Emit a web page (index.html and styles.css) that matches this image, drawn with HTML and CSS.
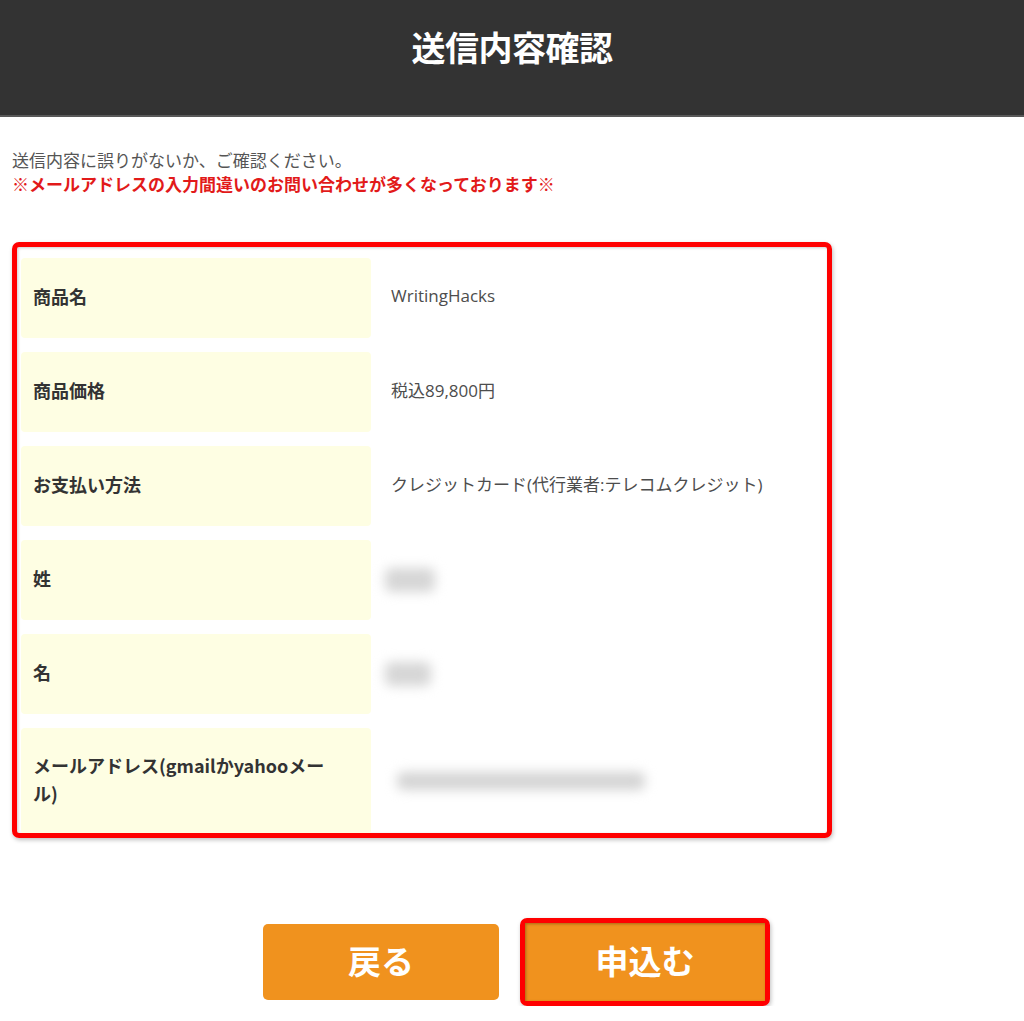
FILE: index.html
```html
<!DOCTYPE html>
<html lang="ja">
<head>
<meta charset="utf-8">
<title>送信内容確認</title>
<link rel="stylesheet" href="styles.css">
</head>
<body>
<header class="header">
  <h1 class="title">送信内容確認</h1>
</header>
<main class="main">
  <p class="intro">送信内容に誤りがないか、ご確認ください。</p>
  <p class="warning">※メールアドレスの入力間違いのお問い合わせが多くなっております※</p>

  <div class="highlight">
    <div class="rows">
      <div class="row">
        <div class="label">商品名</div>
        <div class="value">WritingHacks</div>
      </div>
      <div class="row">
        <div class="label">商品価格</div>
        <div class="value">税込89,800円</div>
      </div>
      <div class="row">
        <div class="label">お支払い方法</div>
        <div class="value">クレジットカード(代行業者:テレコムクレジット)</div>
      </div>
      <div class="row">
        <div class="label">姓</div>
        <div class="value value-blur"><span class="blur blur-short"></span></div>
      </div>
      <div class="row">
        <div class="label">名</div>
        <div class="value value-blur"><span class="blur blur-short2"></span></div>
      </div>
      <div class="row row-tall">
        <div class="label">メールアドレス(gmailかyahooメール)</div>
        <div class="value value-blur"><span class="blur blur-long"></span></div>
      </div>
    </div>
  </div>

  <div class="actions">
    <button class="btn" type="button">戻る</button>
    <div class="btn-mark"><button class="btn btn-submit" type="button">申込む</button></div>
  </div>
</main>
</body>
</html>
```

FILE: styles.css
```css
* { box-sizing: border-box; }

html, body {
  margin: 0;
  padding: 0;
  background: #ffffff;
  font-family: "Noto Sans CJK JP", "Noto Sans", sans-serif;
}

.header {
  height: 117px;
  background: #333333;
  border-bottom: 2px solid #585858;
  display: flex;
  align-items: center;
  justify-content: center;
}

.title {
  margin: 0 0 22px 0;
  color: #ffffff;
  font-size: 34px;
  font-weight: 700;
  letter-spacing: -0.5px;
}

.main {
  padding: 0 12px;
}

.intro {
  margin: 31px 0 0 0;
  font-size: 17px;
  line-height: 24px;
  color: #555555;
}

.warning {
  margin: 0;
  font-size: 17px;
  line-height: 24px;
  font-weight: 700;
  color: #e21a1a;
}

.highlight {
  margin-top: 46px;
  width: 820px;
  height: 596px;
  border: 5px solid #ff0000;
  border-radius: 7px;
  overflow: hidden;
  box-shadow: 1px 2px 4px rgba(0,0,0,0.25), inset 1px 1px 3px rgba(0,0,0,0.2);
  padding: 11px 0 0 4px;
}

.rows {
  display: flex;
  flex-direction: column;
  gap: 14px;
}

.row {
  display: flex;
  align-items: stretch;
}

.label {
  width: 350px;
  flex: none;
  background: #fefee3;
  border-radius: 4px;
  padding: 24px 24px 28px 12px;
  font-size: 18px;
  line-height: 28px;
  font-weight: 700;
  color: #333333;
}

.row-tall .label {
  padding-top: 23px;
  padding-bottom: 27px;
}

.value {
  display: flex;
  align-items: center;
  padding-left: 20px;
  padding-bottom: 5px;
  font-family: "Open Sans", "Noto Sans CJK JP", sans-serif;
  font-size: 17px;
  color: #4d4d4d;
}

.value-blur {
  padding-left: 10px;
  padding-bottom: 0;
}

.blur {
  display: block;
  height: 24px;
  background: #d6d6d6;
  filter: blur(6px);
  border-radius: 6px;
}

.blur-short { width: 50px; margin-left: 4px; }
.blur-short2 { width: 46px; margin-left: 4px; }
.blur-long { width: 248px; margin-left: 16px; background: #d4d4d4; height: 18px; }

.actions {
  margin-top: 80px;
  display: flex;
  justify-content: center;
  align-items: center;
  gap: 21px;
  padding-left: 9px;
}

.btn {
  width: 236px;
  height: 76px;
  border: none;
  border-radius: 5px;
  background: #f0921e;
  color: #ffffff;
  font-family: "Noto Sans CJK JP", sans-serif;
  font-size: 33px;
  font-weight: 700;
  padding: 0 0 4px 0;
}

.btn-mark {
  border: 5px solid #ff0000;
  border-radius: 7px;
  box-shadow: 1px 2px 4px rgba(0,0,0,0.25);
  display: flex;
}

.btn-submit {
  width: 240px;
  height: 78px;
  border-radius: 0;
  box-shadow: inset 1px 1px 3px rgba(0,0,0,0.3);
}
```
